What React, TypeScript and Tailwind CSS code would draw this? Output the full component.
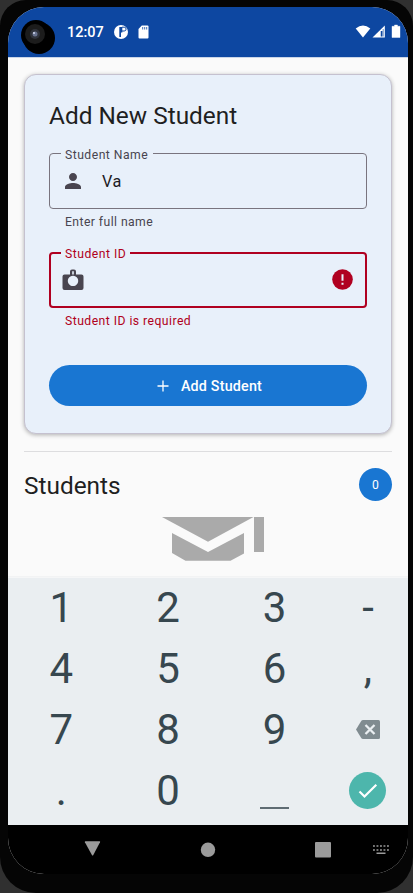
import React from "react";

function StatusBar() {
  return (
    <div className="flex h-[51px] items-center border-b border-[#c9d5e8] bg-[#0d47a1] pl-[59px] pr-[7px] text-white">
      <span className="w-[37px] pt-[3px] text-[14.5px] font-medium leading-none">12:07</span>
      <svg className="ml-[9px]" width="16" height="16" viewBox="0 0 16 16">
        <circle cx="8" cy="8" r="7" fill="#fff" />
        <path d="M6.300 3H8V13H6.300zM8 3h1.300v5.500H8z" fill="#0d47a1" />
        <path d="M9 3.200h2.200a1.900 1.900 0 0 1 0 3.800H9" stroke="#0d47a1" strokeWidth="1" fill="none" />
      </svg>
      <svg className="ml-[9px]" width="11" height="14" viewBox="0 0 11 14">
        <path d="M3.8 0.5H9.500Q10.500 .5 10.500 1.500V12.500Q10.500 13.500 9.500 13.500H1.500Q.5 13.500 .5 12.500V4z" fill="#fff" />
        <path d="M4.700 2v2.500M6.700 2v2.500M8.700 2v2.500" stroke="#0d47a1" strokeWidth=".8" />
      </svg>
      <svg className="ml-auto" width="46" height="16" viewBox="0 0 46 16">
        <path d="M.7 4.400Q8 -1.200 15.300 4.400L8 13.500z" fill="#fff" />
        <path d="M17.500 13.500L29.800 1.500V13.500z" fill="#fff" />
        <path d="M26.600 7v5.500" stroke="#0d47a1" strokeWidth="1.700" />
        <path d="M28.200 5v7.500" stroke="#0d47a1" strokeWidth="1" opacity=".6" />
        <path d="M39.500 1h3v1.300h2.500v11.200h-8V2.300h2.500z" fill="#fff" stroke="#fff" strokeWidth=".4" />
      </svg>
    </div>
  );
}

function PersonIcon() {
  return (
    <svg className="mb-[2px]" width="24" height="24" viewBox="0 0 24 24" fill="#49454f">
      <path d="M12 12c2.210 0 4-1.790 4-4s-1.790-4-4-4-4 1.790-4 4 1.790 4 4 4zm0 2c-2.670 0-8 1.340-8 4v2h16v-2c0-2.660-5.330-4-8-4z" />
    </svg>
  );
}

function BadgeIcon() {
  return (
    <svg className="mb-[3px]" width="24" height="24" viewBox="0 0 24 24" fill="#49454f">
      <path
        fillRule="evenodd"
        d="M9 6.500V3.500Q9 1.500 11 1.500h2Q15 1.500 15 3.500V6.500h5.500Q22.500 6.500 22.500 8.500v11.500q0 2-2 2H3.500q-2 0-2-2V8.500q0-2 2-2zM11.200 3.200v3.300h1.600V3.200zM12 7.700a5.200 5.200 0 1 0 .01 0z"
      />
    </svg>
  );
}

function Keypad() {
  const key = "flex h-[61px] items-center justify-center";
  return (
    <div className="grid h-[248px] grid-cols-[106.67px_106.67px_106.66px_80px] content-start bg-[#eaeef1] text-[42px] leading-none text-[#37474f] shadow-[inset_0_1px_0_#f5f6f7]">
      {["1", "2", "3", "-", "4", "5", "6", ",", "7", "8", "9"].map((k) => (
        <div key={k} className={key}>{k}</div>
      ))}
      <div className={key}>
        <svg width="24" height="19" viewBox="0 0 24 19">
          <path d="M7 0H22.500Q24 0 24 1.500V17.500Q24 19 22.500 19H7Q6 19 5.400 18.200L0 9.500L5.400 .8Q6 0 7 0z" fill="#808b90" />
          <path d="M9.500 5l9 9M18.500 5l-9 9" stroke="#eaeef1" strokeWidth="2.300" />
        </svg>
      </div>
      <div className={key}>.</div>
      <div className={key}>0</div>
      <div className={key}>
        <div className="mt-[35px] h-[2px] w-[29px] bg-[#5f6c73]" />
      </div>
      <div className={key}>
        <div className="flex size-[37px] items-center justify-center rounded-full bg-[#4db6ac]">
          <svg width="20" height="16" viewBox="0 0 20 16">
            <path d="M1.500 8.500l5 5L18.300 1.700" stroke="#fff" strokeWidth="2.200" fill="none" />
          </svg>
        </div>
      </div>
    </div>
  );
}

function NavBar() {
  return (
    <div className="flex h-[49px] items-center bg-black">
      <svg width="400" height="49" viewBox="0 0 400 49" fill="#9b9b9b">
        <path d="M77.500 16.200h14q1 0 .5 1L85.300 30q-.7 1-1.400 0L76.900 17.200q-.4-1 .6-1z" />
        <circle cx="200" cy="24.800" r="7.200" />
        <rect x="307" y="17" width="16" height="15.500" rx="1" />
        <path d="M365 21h16M365 25h16" stroke="#9b9b9b" strokeWidth="1.600" strokeDasharray="1.900 1.600" />
        <rect x="368.500" y="27.500" width="9" height="1.500" />
      </svg>
    </div>
  );
}

export default function App() {
  return (
    <div className="h-[893px] w-[413px] overflow-hidden bg-[#303030] font-[Roboto,sans-serif]">
      <div className="relative h-[893px] w-[413px] rounded-b-[36px] rounded-t-[26px] bg-[#050505] pl-[8px] pr-[5px] pt-[7px]">
        <div className="h-[867px] w-[400px] overflow-hidden rounded-[36px] bg-[#fafafa]">
          <StatusBar />
          <main className="h-[519px] overflow-hidden border-b border-[#f2f3f4] px-4 pt-[16px]">
            <section className="h-[360px] rounded-[12px] border border-[#c5c1cf] bg-[#e8f0fa] px-6 shadow-[0_1px_4px_rgba(0,0,0,0.3)]">
              <h1 className="pt-[25px] text-[24.4px] leading-8 text-[#1f1f1f]">Add New Student</h1>
              <fieldset className="mt-[13px] h-[64px] rounded-[4px] border border-[#79747e] pl-[11px]">
                <legend className="h-4 pl-1 pr-[5px] text-[12.2px] leading-[20px] tracking-[0.47px] text-[#49454f]">Student Name</legend>
                <div className="flex h-[41px] items-center">
                  <PersonIcon />
                  <span className="ml-[17px] pt-[2px] text-[16.3px] tracking-[0.4px] text-[#1c1b1f]">Va</span>
                </div>
              </fieldset>
              <p className="ml-4 mt-[5px] h-4 text-[12.2px] leading-[17px] tracking-[0.43px] text-[#49454f]">Enter full name</p>
              <fieldset className="mt-[15px] h-[63px] rounded-[4px] border-2 border-[#b00020] pl-[10px] pr-[12px]">
                <legend className="h-4 px-1 text-[12.2px] leading-[18px] tracking-[0.5px] text-[#b00020]">Student ID</legend>
                <div className="flex h-10 items-center justify-between">
                  <BadgeIcon />
                  <svg className="mb-[3px]" width="21" height="21" viewBox="0 0 21 21">
                    <circle cx="10.500" cy="10.500" r="10.300" fill="#b00020" />
                    <path d="M10.500 5.200v6.500M10.500 13.700v2" stroke="#e8f0fa" strokeWidth="2" />
                  </svg>
                </div>
              </fieldset>
              <p className="ml-4 mt-[5px] h-4 text-[12.2px] leading-[17px] tracking-[0.46px] text-[#b00020]">Student ID is required</p>
              <button className="mt-[36px] flex h-[41px] w-full items-center justify-center rounded-full bg-[#1976d2] pl-[3px] pt-[2px] text-[14.300px] font-medium tracking-[0.2px] text-white">
                <svg className="mb-[2px] mr-3" width="12" height="12" viewBox="0 0 12 12">
                  <path d="M6 .5v11M.5 6h11" stroke="#fff" strokeWidth="1.300" />
                </svg>
                Add Student
              </button>
            </section>
            <div className="mt-[17px] h-px bg-[#dddddf]" />
            <div className="mt-4 flex h-[33px] items-center justify-between">
              <h2 className="pt-[2px] text-[24.4px] leading-8 text-[#1f1f1f]">Students</h2>
              <span className="flex size-[33px] items-center justify-center rounded-full bg-[#1976d2] pt-[2px] text-[12.200px] text-white">0</span>
            </div>
            <svg className="ml-[138px] mt-[16px]" width="102" height="44" viewBox="0 0 102 44" fill="#aaaaaa">
              <path d="M0 0H91.500L46 24.800zM92 0h10v35H92zM10 16l36 19 36-19v20.500L68.500 43.700H23.500L10 36z" />
            </svg>
          </main>
          <Keypad />
          <NavBar />
        </div>
        <svg className="absolute left-[20px] top-[19px]" width="36" height="36" viewBox="0 0 36 36">
          <circle cx="16" cy="16" r="15" fill="#000" />
          <circle cx="19" cy="19" r="16" fill="#000" />
          <circle cx="15" cy="15" r="10" fill="#1c1c1c" />
          <circle cx="15" cy="15" r="5" fill="#30333b" />
          <circle cx="15" cy="15" r="2.500" fill="#69738f" />
          <circle cx="14" cy="14" r="1" fill="#d5dbf0" />
        </svg>
      </div>
    </div>
  );
}
